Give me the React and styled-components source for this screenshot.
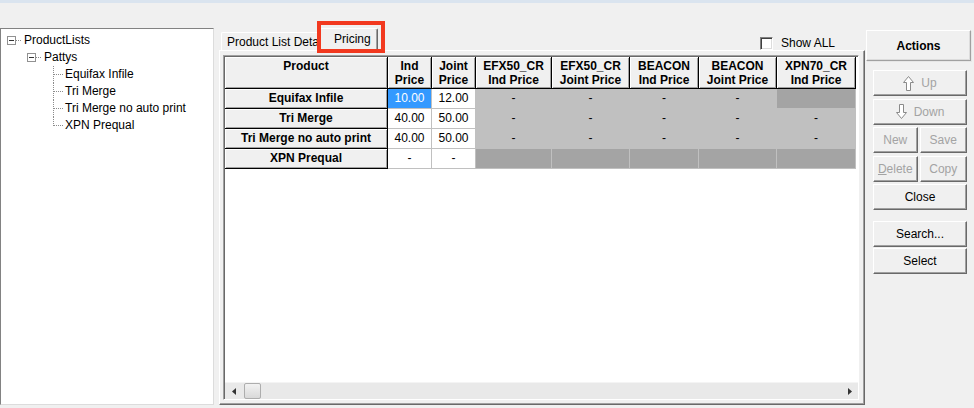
import React from 'react';
import styled, { createGlobalStyle } from 'styled-components';

const Global = createGlobalStyle`
  html, body { margin: 0; padding: 0; background: #f0f0f0; }
  body { font-family: "Liberation Sans", Arial, sans-serif; font-size: 12px; color: #000; }
  * { box-sizing: border-box; }
`;

const Window = styled.div`
  position: relative;
  width: 974px;
  height: 408px;
  background: #f0f0f0;
  display: flex;
  flex-direction: column;
  overflow: hidden;
`;

const TitleStrip = styled.div`
  flex: none;
  height: 3px;
  background: #dae4ef;
`;

const MenuArea = styled.div`
  flex: none;
  height: 25px;
  background: #f0f0f0;
`;

const Body = styled.div`
  flex: 1;
  min-height: 0;
  display: flex;
  padding-bottom: 3px;
`;

/* ---------- Tree ---------- */
const TreePanel = styled.div`
  flex: none;
  width: 214px;
  background: #fff;
  border-top: 1px solid #828282;
  border-left: 1px solid #828282;
  border-right: 1px solid #dcdcdc;
  border-bottom: 1px solid #dcdcdc;
  padding-top: 3px;
`;

const TreeRow = styled.div`
  display: flex;
  align-items: center;
  height: 17px;
  padding-left: ${p => p.$indent}px;
  white-space: nowrap;
`;

const ExpandBox = styled.span`
  position: relative;
  flex: none;
  width: 9px;
  height: 9px;
  border: 1px solid #919191;
  background: #fff;
  &::after {
    content: "";
    position: absolute;
    left: 1px;
    top: 3px;
    width: 5px;
    height: 1px;
    background: #333;
  }
`;

const Label = styled.span`
  padding-left: 2px;
  line-height: 17px;
`;

const Lines = styled.svg`
  flex: none;
  display: block;
`;

function ParentNode({ indent, label }) {
  return (
    <TreeRow $indent={indent}>
      <ExpandBox />
      <Lines width="6" height="17">
        <line x1="0" y1="8.5" x2="6" y2="8.5" stroke="#8c8c8c" strokeDasharray="1 1" />
      </Lines>
      <Label>{label}</Label>
    </TreeRow>
  );
}

function ChildNode({ label, last }) {
  return (
    <TreeRow $indent={51}>
      <Lines width="11" height="17">
        <line x1="1.5" y1="0" x2="1.5" y2={last ? 9 : 17} stroke="#8c8c8c" strokeDasharray="1 1" />
        <line x1="2" y1="8.5" x2="11" y2="8.5" stroke="#8c8c8c" strokeDasharray="1 1" />
      </Lines>
      <Label>{label}</Label>
    </TreeRow>
  );
}

/* ---------- Tabs ---------- */
const TabControl = styled.div`
  flex: none;
  width: 646px;
  margin-left: 5px;
  display: flex;
  flex-direction: column;
`;

const TabStrip = styled.div`
  flex: none;
  height: 22px;
  display: flex;
  align-items: flex-end;
  position: relative;
  z-index: 1;
`;

const Tab = styled.div`
  flex: none;
  width: ${p => p.$w}px;
  height: ${p => (p.$active ? 23 : 18)}px;
  margin-left: ${p => p.$ml}px;
  margin-bottom: ${p => (p.$active ? -1 : 0)}px;
  background: #f0f0f0;
  border-top: 1px solid #fff;
  border-left: 1px solid #fff;
  border-right: 1px solid #696969;
  box-shadow: inset -1px 0 0 #a0a0a0;
  border-radius: 2px 2px 0 0;
  overflow: hidden;
  white-space: nowrap;
  padding: ${p => (p.$active ? '4px 0 0 13px' : '3px 0 0 5px')};
  line-height: 13px;
  position: relative;
  z-index: ${p => (p.$active ? 2 : 1)};
`;

const Spacer = styled.div`
  flex: 1;
`;

const CheckWrap = styled.label`
  display: flex;
  align-items: center;
  gap: 8px;
  margin-right: 30px;
  align-self: center;
  margin-top: 8px;
`;

const CheckBox = styled.span`
  width: 13px;
  height: 13px;
  background: #fff;
  border-top: 1px solid #808080;
  border-left: 1px solid #808080;
  border-right: 1px solid #fff;
  border-bottom: 1px solid #fff;
  box-shadow: inset 1px 1px 0 #404040, inset -1px -1px 0 #dcdcdc;
`;

const TabPage = styled.div`
  flex: 1;
  min-height: 0;
  border-top: 1px solid #fff;
  border-left: 1px solid #fff;
  border-right: 1px solid #696969;
  border-bottom: 1px solid #696969;
  box-shadow: inset -1px -1px 0 #a0a0a0;
  padding: 4px 5px 4px 3px;
  display: flex;
`;

/* ---------- Grid ---------- */
const GridFrame = styled.div`
  flex: 1;
  display: flex;
  flex-direction: column;
  border-top: 1px solid #a0a0a0;
  border-left: 1px solid #a0a0a0;
  border-right: 1px solid #fff;
  border-bottom: 1px solid #fff;
  box-shadow: inset 1px 1px 0 #696969;
  padding: 1px 0 0 1px;
  background: #fff;
`;

const GridScroll = styled.div`
  flex: 1;
  min-height: 0;
  overflow: hidden;
  background: #fff;
`;

const Grid = styled.div`
  display: grid;
  grid-template-columns: 163px 44px 44px 76px 78px 69px 78px 79px;
  grid-template-rows: 32px repeat(4, 20px);
`;

const HeadCell = styled.div`
  background: #f0f0f0;
  border-right: 1px solid #000;
  border-bottom: 1px solid #000;
  box-shadow: inset 1px 1px 0 #fff, inset -1px -1px 0 #a0a0a0;
  font-weight: bold;
  text-align: center;
  line-height: 14px;
  padding-top: 2px;
  white-space: nowrap;
  overflow: hidden;
`;

const RowHead = styled(HeadCell)`
  padding-top: 0;
  line-height: 19px;
`;

const bg = { white: '#fff', sel: '#3399ff', gray: '#c0c0c0', dark: '#a4a4a4' };

const Cell = styled.div`
  background: ${p => bg[p.$kind]};
  color: ${p => (p.$kind === 'sel' ? '#fff' : '#000')};
  border-right: 1px solid #c0c0c0;
  border-bottom: 1px solid #c0c0c0;
  text-align: center;
  line-height: 19px;
  white-space: nowrap;
  overflow: hidden;
`;

const ScrollBar = styled.div`
  flex: none;
  height: 17px;
  background: #e9e9e9;
  border-top: 1px solid #f4f4f4;
  display: flex;
  align-items: center;
`;

const ArrowBtn = styled.div`
  flex: none;
  width: 17px;
  height: 16px;
  display: flex;
  align-items: center;
  justify-content: center;
`;

const Thumb = styled.div`
  flex: none;
  width: 17px;
  height: 16px;
  margin-left: 2px;
  border: 1px solid #adadad;
  border-radius: 2px;
  background: linear-gradient(#f2f2f2, #d9d9d9);
`;

/* ---------- Actions ---------- */
const ActionsPanel = styled.div`
  flex: 1;
  display: flex;
  flex-direction: column;
  padding: 2px 3px 0 1px;
`;

const ActionsHeader = styled.div`
  flex: none;
  height: 31px;
  border-top: 1px solid #fff;
  border-left: 1px solid #fff;
  border-right: 1px solid #a0a0a0;
  border-bottom: 1px solid #a0a0a0;
  box-shadow: inset -1px -1px 0 #dcdcdc, 1px 1px 0 #e6e6e6;
  font-weight: bold;
  display: flex;
  align-items: center;
  justify-content: center;
`;

const ButtonStack = styled.div`
  flex: none;
  display: flex;
  flex-direction: column;
  gap: ${p => p.$gap}px;
  margin: ${p => p.$mt}px 4px 0 7px;
`;

const ButtonRow = styled.div`
  flex: none;
  display: flex;
  gap: 2px;
`;

const Btn = styled.button`
  flex: ${p => (p.$flex ? `${p.$flex} 1 0` : 'none')};
  min-width: 0;
  height: 26px;
  padding: 0;
  margin: 0;
  font-family: "Liberation Sans", Arial, sans-serif;
  font-size: 12px;
  color: ${p => (p.disabled ? '#a3a3a3' : '#000')};
  background: #f0f0f0;
  border-top: 1px solid #fff;
  border-left: 1px solid #fff;
  border-right: 1px solid #696969;
  border-bottom: 1px solid #696969;
  box-shadow: inset -1px -1px 0 #a0a0a0;
  display: flex;
  align-items: center;
  justify-content: center;
  gap: 7px;
  cursor: default;
  u { text-decoration: underline; }
`;

function Arrow({ down }) {
  return (
    <svg width="11" height="15" viewBox="0 0 11 15" style={{ display: 'block' }}>
      <path
        d="M5.5 0.5 L10.5 6.5 H7.5 V14.5 H3.5 V6.5 H0.5 Z"
        fill="#fff"
        stroke="#8a8a8a"
        strokeWidth="1"
        transform={down ? 'rotate(180 5.5 7.5)' : undefined}
      />
    </svg>
  );
}

const RedMark = styled.div`
  position: absolute;
  left: 317px;
  top: 21px;
  width: 68px;
  height: 32px;
  border: 4px solid #f2391f;
  pointer-events: none;
  z-index: 5;
`;

const headers = [
  ['Product', ''],
  ['Ind', 'Price'],
  ['Joint', 'Price'],
  ['EFX50_CR', 'Ind Price'],
  ['EFX50_CR', 'Joint Price'],
  ['BEACON', 'Ind Price'],
  ['BEACON', 'Joint Price'],
  ['XPN70_CR', 'Ind Price'],
];

const rows = [
  { name: 'Equifax Infile', cells: [['10.00', 'sel'], ['12.00', 'white'], ['-', 'gray'], ['-', 'gray'], ['-', 'gray'], ['-', 'gray'], ['', 'dark']] },
  { name: 'Tri Merge', cells: [['40.00', 'white'], ['50.00', 'white'], ['-', 'gray'], ['-', 'gray'], ['-', 'gray'], ['-', 'gray'], ['-', 'gray']] },
  { name: 'Tri Merge no auto print', cells: [['40.00', 'white'], ['50.00', 'white'], ['-', 'gray'], ['-', 'gray'], ['-', 'gray'], ['-', 'gray'], ['-', 'gray']] },
  { name: 'XPN Prequal', cells: [['-', 'white'], ['-', 'white'], ['', 'dark'], ['', 'dark'], ['', 'dark'], ['', 'dark'], ['', 'dark']] },
];

export default function App() {
  return (
    <Window>
      <Global />
      <TitleStrip />
      <MenuArea />
      <Body>
        <TreePanel>
          <ParentNode indent={6} label="ProductLists" />
          <ParentNode indent={26} label="Pattys" />
          <ChildNode label="Equifax Infile" />
          <ChildNode label="Tri Merge" />
          <ChildNode label="Tri Merge no auto print" />
          <ChildNode label="XPN Prequal" last />
        </TreePanel>

        <TabControl>
          <TabStrip>
            <Tab $w={102} $ml={2}>Product List Deta</Tab>
            <Tab $w={58} $ml={-3} $active>Pricing</Tab>
            <Spacer />
            <CheckWrap>
              <CheckBox />
              <span>Show ALL</span>
            </CheckWrap>
          </TabStrip>
          <TabPage>
            <GridFrame>
              <GridScroll>
                <Grid>
                  {headers.map(([a, b], i) => (
                    <HeadCell key={i}>
                      {a}
                      {b ? <br /> : null}
                      {b}
                    </HeadCell>
                  ))}
                  {rows.map(r => (
                    <React.Fragment key={r.name}>
                      <RowHead>{r.name}</RowHead>
                      {r.cells.map(([t, k], j) => (
                        <Cell key={j} $kind={k}>{t}</Cell>
                      ))}
                    </React.Fragment>
                  ))}
                </Grid>
              </GridScroll>
              <ScrollBar>
                <ArrowBtn>
                  <svg width="4" height="7" viewBox="0 0 4 7"><path d="M4 0 V7 L0 3.5 Z" fill="#333" /></svg>
                </ArrowBtn>
                <Thumb />
                <Spacer />
                <ArrowBtn>
                  <svg width="4" height="7" viewBox="0 0 4 7"><path d="M0 0 V7 L4 3.5 Z" fill="#333" /></svg>
                </ArrowBtn>
              </ScrollBar>
            </GridFrame>
          </TabPage>
        </TabControl>

        <ActionsPanel>
          <ActionsHeader>Actions</ActionsHeader>
          <ButtonStack $gap={2.5} $mt={9}>
            <Btn disabled><Arrow />Up</Btn>
            <Btn disabled><Arrow down />Down</Btn>
            <ButtonRow>
              <Btn disabled $flex={45}>New</Btn>
              <Btn disabled $flex={48}>Save</Btn>
            </ButtonRow>
            <ButtonRow>
              <Btn disabled $flex={45}><span><u>D</u>elete</span></Btn>
              <Btn disabled $flex={48}>Copy</Btn>
            </ButtonRow>
            <Btn>Close</Btn>
          </ButtonStack>
          <ButtonStack $gap={1} $mt={11}>
            <Btn>Search...</Btn>
            <Btn>Select</Btn>
          </ButtonStack>
        </ActionsPanel>
      </Body>
      <RedMark />
    </Window>
  );
}
